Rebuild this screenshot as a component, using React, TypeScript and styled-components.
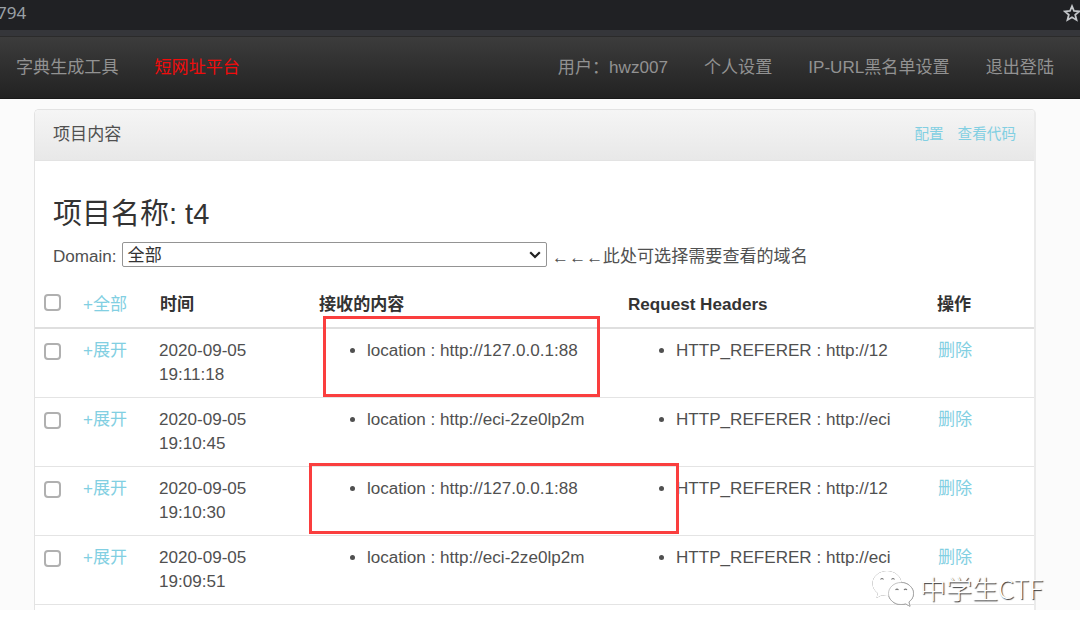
import React from "react";
import styled, { createGlobalStyle } from "styled-components";

const GlobalStyle = createGlobalStyle`
  * { box-sizing: border-box; }
  body {
    margin: 0;
    background: #fff;
    color: #505050;
    font-family: "Liberation Sans", "Noto Sans CJK SC", sans-serif;
    font-size: 17.08px;
    line-height: 24.3px;
  }
`;

const Page = styled.div`
  position: relative;
  width: 1080px;
  height: 637px;
  overflow: hidden;
  background: #fff;
`;

const BrowserBar = styled.div`
  display: flex;
  justify-content: space-between;
  height: 36px;
  background: #202124;
  border-bottom: 6px solid #35363a;
  color: #9aa0a6;
  font-family: "Noto Sans", sans-serif;
`;

const AddressTail = styled.span`
  margin-left: -3px;
  font-size: 17px;
  line-height: 25px;
`;

const StarIcon = styled.svg`
  width: 18px;
  height: 18px;
  margin: 4px -1px 0 0;
  flex: none;
`;

const Nav = styled.nav`
  display: flex;
  align-items: center;
  height: 63px;
  padding: 2px 26px 0 16px;
  background: linear-gradient(#3c3c3c, #222);
  border-top: 1px solid #2b2b2b;
  border-bottom: 1px solid #191919;
  color: #929292;
  white-space: nowrap;
`;

const NavGroup = styled.div<{ $end?: boolean }>`
  display: flex;
  gap: 36px;
  margin-left: ${(p) => (p.$end ? "auto" : "0")};
`;

const NavItem = styled.a<{ $hot?: boolean }>`
  color: ${(p) => (p.$hot ? "#f00c0c" : "inherit")};
`;

const Content = styled.main`
  height: 511px;
  padding: 10px 44px 0 34px;
  background: #fbfbfb;
  overflow: hidden;
`;

const Panel = styled.section`
  height: 530px;
  background: #fff;
  border: 1px solid #e3e3e3;
  border-right-width: 2px;
  border-right-color: #ebebeb;
  border-radius: 5px;
`;

const PanelHead = styled.header`
  display: flex;
  justify-content: space-between;
  align-items: center;
  height: 51px;
  padding: 1px 18px 0;
  border-bottom: 1px solid #e3e3e3;
  border-radius: 4px 4px 0 0;
  background: linear-gradient(#f5f5f5, #e8e8e8);
`;

const HeadLinks = styled.div`
  display: flex;
  gap: 14px;
  font-size: 14.6px;
  padding-bottom: 2px;
`;

const Link = styled.a`
  color: #82cfe2;
`;

const Title = styled.h3`
  margin: 35px 0 0 18px;
  color: #333;
  font-size: 29px;
  font-weight: 400;
  line-height: 36px;
`;

const Filter = styled.div`
  display: flex;
  align-items: center;
  height: 28px;
  margin: 9px 0 0 18px;
  padding-top: 4px;
  white-space: nowrap;
`;

const SelectBox = styled.div`
  display: flex;
  align-items: center;
  justify-content: space-between;
  width: 425px;
  height: 25px;
  margin: -5px 5px 0 5px;
  padding: 4px 5px 0 5px;
  border: 1.5px solid #949494;
  border-radius: 2px;
  background: #fff;
  color: #333;
`;

const Chevron = styled.svg`
  width: 12px;
  height: 8px;
  margin-top: -4px;
`;

const Arrows = styled.span`
  padding-top: 2px;
  font-family: "Liberation Serif", serif;
`;

const columns = "48px 76px 160px 309px 309px 1fr";
const headColumns = "48px 77px 159px 309px 309px 1fr";

const Row = styled.div<{ $head?: boolean }>`
  display: grid;
  grid-template-columns: ${(p) => (p.$head ? headColumns : columns)};
  height: ${(p) => (p.$head ? "49px" : "69px")};
  margin-top: ${(p) => (p.$head ? "11px" : "0")};
  padding-top: ${(p) => (p.$head ? "13px" : "10px")};
  border-bottom: ${(p) => (p.$head ? "2px solid #dfdfdf" : "1px solid #e4e4e4")};
  color: ${(p) => (p.$head ? "#333" : "inherit")};
  font-weight: ${(p) => (p.$head ? 700 : 400)};
  white-space: nowrap;
`;

const Cell = styled.div<{ $nudge?: boolean }>`
  min-width: 0;
  padding-left: ${(p) => (p.$nudge ? "1px" : "0")};
`;

const PlainLink = styled(Link)`
  font-weight: 400;
`;

const Check = styled.input<{ $head?: boolean }>`
  appearance: none;
  display: block;
  width: 17px;
  height: 17px;
  margin: ${(p) => (p.$head ? "1px" : "4px")} 0 0 9px;
  border: 2px solid #b0b0b0;
  border-radius: 4px;
  background: #fff;
`;

const List = styled.ul`
  margin: 0;
  padding: 0 0 0 48px;
  list-style: disc;
`;

const Mark = styled.div<{ $x: number; $y: number; $w: number; $h: number }>`
  position: absolute;
  left: ${(p) => p.$x}px;
  top: ${(p) => p.$y}px;
  width: ${(p) => p.$w}px;
  height: ${(p) => p.$h}px;
  border: 3px solid #fa3e3e;
`;

const Watermark = styled.div`
  position: absolute;
  left: 871px;
  top: 569px;
  display: flex;
  align-items: center;
  gap: 6px;
  color: #fff;
  font-family: "Noto Sans CJK SC", sans-serif;
  font-size: 26px;
  font-weight: 300;
  line-height: 36px;
  text-shadow: 1px 1px 1px #333;
  white-space: nowrap;
`;

const WatermarkText = styled.span`
  margin-top: -1px;
`;

const ChatIcon = styled.svg`
  width: 43px;
  height: 38px;
  filter: drop-shadow(0.6px 0.8px 0.4px #555);
`;

const records = [
  { time: "19:11:18", body: "http://127.0.0.1:88", referer: "http://12" },
  { time: "19:10:45", body: "http://eci-2ze0lp2m", referer: "http://eci" },
  { time: "19:10:30", body: "http://127.0.0.1:88", referer: "http://12" },
  { time: "19:09:51", body: "http://eci-2ze0lp2m", referer: "http://eci" },
];

export default function App() {
  return (
    <Page>
      <GlobalStyle />
      <BrowserBar>
        <AddressTail>794</AddressTail>
        <StarIcon viewBox="0 0 18 18" fill="none" stroke="#c4c7ca" strokeWidth="1.8">
          <path d="M9 2.200 11 7l5.200.4-4 3.400 1.300 5.100L9 13.200l-4.500 2.700 1.300-5.100-4-3.400L7 7z" />
        </StarIcon>
      </BrowserBar>
      <Nav>
        <NavGroup>
          <NavItem>字典生成工具</NavItem>
          <NavItem $hot>短网址平台</NavItem>
        </NavGroup>
        <NavGroup $end>
          <NavItem>用户：hwz007</NavItem>
          <NavItem>个人设置</NavItem>
          <NavItem>IP-URL黑名单设置</NavItem>
          <NavItem>退出登陆</NavItem>
        </NavGroup>
      </Nav>
      <Content>
        <Panel>
          <PanelHead>
            <span>项目内容</span>
            <HeadLinks>
              <Link>配置</Link>
              <Link>查看代码</Link>
            </HeadLinks>
          </PanelHead>
          <Title>项目名称: t4</Title>
          <Filter>
            <span>Domain:</span>
            <SelectBox>
              全部
              <Chevron viewBox="0 0 12 8" fill="none" stroke="#222" strokeWidth="2.2">
                <path d="M1.2 1.2 6 6l4.800-4.800" />
              </Chevron>
            </SelectBox>
            <Arrows>←←←</Arrows>
            <span>此处可选择需要查看的域名</span>
          </Filter>
          <Row $head>
            <Cell><Check $head type="checkbox" /></Cell>
            <Cell><PlainLink>+全部</PlainLink></Cell>
            <Cell>时间</Cell>
            <Cell>接收的内容</Cell>
            <Cell>Request Headers</Cell>
            <Cell>操作</Cell>
          </Row>
          {records.map((r) => (
            <Row key={r.time}>
              <Cell><Check type="checkbox" /></Cell>
              <Cell><Link>+展开</Link></Cell>
              <Cell>2020-09-05<br />{r.time}</Cell>
              <Cell><List><li>location : {r.body}</li></List></Cell>
              <Cell><List><li>HTTP_REFERER : {r.referer}</li></List></Cell>
              <Cell $nudge><Link>删除</Link></Cell>
            </Row>
          ))}
        </Panel>
      </Content>
      <Mark $x={323} $y={316} $w={277} $h={81} />
      <Mark $x={309} $y={463} $w={370} $h={71} />
      <Watermark>
        <ChatIcon viewBox="0 0 43 38" fill="#fff">
          <path d="M16 2C8 2 1.500 7.500 1.500 14.500c0 4 2 7.500 5.300 9.700L5.500 29l5.300-2.800c1.700.5 3.400.8 5.200.8 8 0 14.500-5.500 14.500-12.500S24 2 16 2z" />
          <path d="M30 13.500c-7 0-12.500 5-12.500 11s5.500 11 12.500 11c1.600 0 3.100-.2 4.500-.7l4.500 2.400-1.200-4.200c2.900-2 4.700-5 4.700-8.500 0-6-5.500-11-12.500-11z" stroke="#aaa" strokeWidth=".7" />
          <path d="M9.500 10.500q1.500-2 3 0M20.500 10.500q1.500-2 3 0M24.500 21q1.500-1.800 3 0M33 21q1.500-1.800 3 0" fill="none" stroke="#777" strokeWidth="1.100" />
        </ChatIcon>
        <WatermarkText>中学生CTF</WatermarkText>
      </Watermark>
    </Page>
  );
}
